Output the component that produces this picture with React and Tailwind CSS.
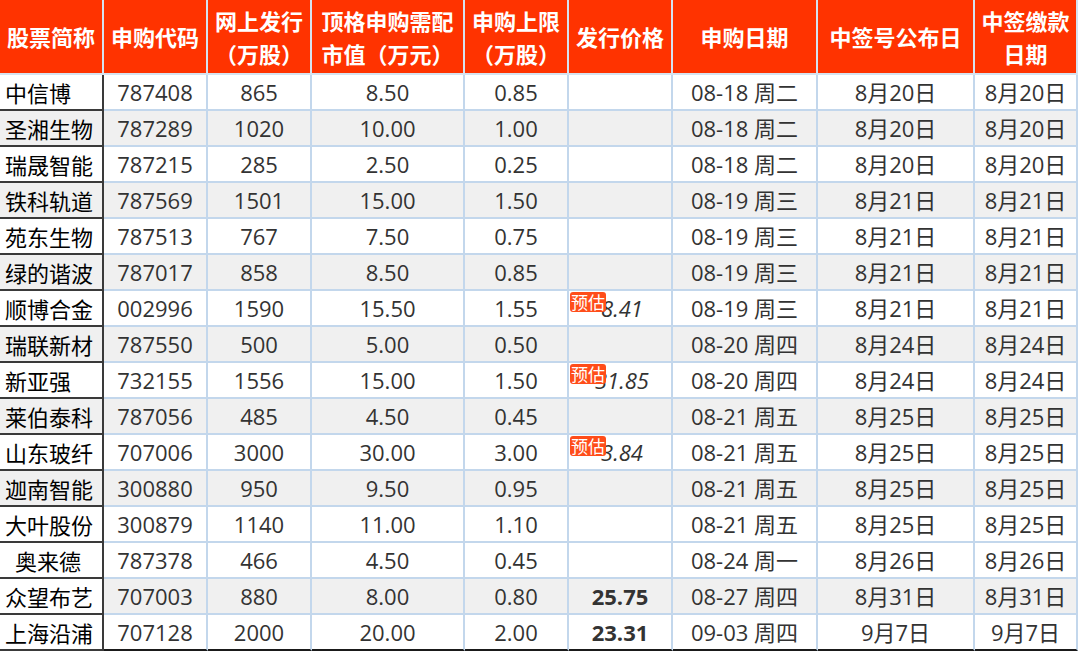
import React from "react";

const rows = [
  ["中信博", "787408", "865", "8.50", "0.85", null, "08-18 周二", "8月20日", "8月20日"],
  ["圣湘生物", "787289", "1020", "10.00", "1.00", null, "08-18 周二", "8月20日", "8月20日"],
  ["瑞晟智能", "787215", "285", "2.50", "0.25", null, "08-18 周二", "8月20日", "8月20日"],
  ["铁科轨道", "787569", "1501", "15.00", "1.50", null, "08-19 周三", "8月21日", "8月21日"],
  ["苑东生物", "787513", "767", "7.50", "0.75", null, "08-19 周三", "8月21日", "8月21日"],
  ["绿的谐波", "787017", "858", "8.50", "0.85", null, "08-19 周三", "8月21日", "8月21日"],
  ["顺博合金", "002996", "1590", "15.50", "1.55", { est: "8.41" }, "08-19 周三", "8月21日", "8月21日"],
  ["瑞联新材", "787550", "500", "5.00", "0.50", null, "08-20 周四", "8月24日", "8月24日"],
  ["新亚强", "732155", "1556", "15.00", "1.50", { est: "31.85" }, "08-20 周四", "8月24日", "8月24日"],
  ["莱伯泰科", "787056", "485", "4.50", "0.45", null, "08-21 周五", "8月25日", "8月25日"],
  ["山东玻纤", "707006", "3000", "30.00", "3.00", { est: "3.84" }, "08-21 周五", "8月25日", "8月25日"],
  ["迦南智能", "300880", "950", "9.50", "0.95", null, "08-21 周五", "8月25日", "8月25日"],
  ["大叶股份", "300879", "1140", "11.00", "1.10", null, "08-21 周五", "8月25日", "8月25日"],
  ["奥来德", "787378", "466", "4.50", "0.45", null, "08-24 周一", "8月26日", "8月26日"],
  ["众望布艺", "707003", "880", "8.00", "0.80", { bold: "25.75" }, "08-27 周四", "8月31日", "8月31日"],
  ["上海沿浦", "707128", "2000", "20.00", "2.00", { bold: "23.31" }, "09-03 周四", "9月7日", "9月7日"],
];

const grayRows = [1, 3, 5, 7, 9, 11, 14];

const headers = [
  ["股票简称"],
  ["申购代码"],
  ["网上发行", "（万股）"],
  ["顶格申购需配", "市值（万元）"],
  ["申购上限", "（万股）"],
  ["发行价格"],
  ["申购日期"],
  ["中签号公布日"],
  ["中签缴款", "日期"],
];

const font = { fontFamily: '"Open Sans", "Noto Sans CJK SC", sans-serif' };
const cjk = { fontFamily: '"Noto Sans CJK SC", sans-serif' };

export default function App() {
  return (
    <div className="w-[1080px] h-[651px] bg-white overflow-hidden" style={font}>
      <div className="grid grid-cols-[104px_104px_104px_153px_104px_104px_145px_157px_103px]">
        {headers.map((h, i) => (
          <div
            key={i}
            className="h-[75px] bg-[#ff3300] border-r-2 border-b-2 border-[#d6e3f0] flex flex-col items-center justify-center text-white font-bold text-[22px] leading-[33px]"
            style={cjk}
          >
            {h.map((t, j) => (
              <span key={j} className="whitespace-nowrap">{t}</span>
            ))}
          </div>
        ))}
        {rows.map((r, ri) => {
          const gray = grayRows.includes(ri);
          const last = ri === rows.length - 1;
          const bg = gray ? "bg-[#f0f0f0]" : "bg-white";
          return r.map((c, ci) => {
            if (ci === 0) {
              return (
                <div
                  key={ri + "-" + ci}
                  className={`h-[36px] ${ri === 14 ? "bg-white" : bg} border-r-2 border-b-2 border-[#3a3a3a] flex items-center ${ri === 13 ? "pl-[15px]" : "pl-[5px]"} text-[22px] text-black whitespace-nowrap`}
                  style={cjk}
                >
                  {c}
                </div>
              );
            }
            const border = last ? "border-b-2 border-b-[#1a1a1a]" : "border-b-2 border-b-[#c3d7ec]";
            if (ci === 5) {
              return (
                <div
                  key={ri + "-" + ci}
                  className={`relative h-[36px] ${bg} border-r-2 border-r-[#c3d7ec] ${border} flex items-center justify-center text-[22px] text-[#333]`}
                >
                  {c && c.est && (
                    <>
                      <span className="italic pl-[4px]">{c.est}</span>
                      <span
                        className="absolute left-[1px] top-[1px] h-[20px] px-[1px] rounded-[3px] bg-[#ff4d1a] text-white text-[17px] leading-[20px]"
                        style={cjk}
                      >
                        预估
                      </span>
                    </>
                  )}
                  {c && c.bold && <span className="font-bold">{c.bold}</span>}
                </div>
              );
            }
            return (
              <div
                key={ri + "-" + ci}
                className={`h-[36px] ${bg} border-r-2 border-r-[#c3d7ec] ${border} flex items-center justify-center text-[22px] text-[#333] whitespace-nowrap`}
              >
                {c}
              </div>
            );
          });
        })}
      </div>
    </div>
  );
}
